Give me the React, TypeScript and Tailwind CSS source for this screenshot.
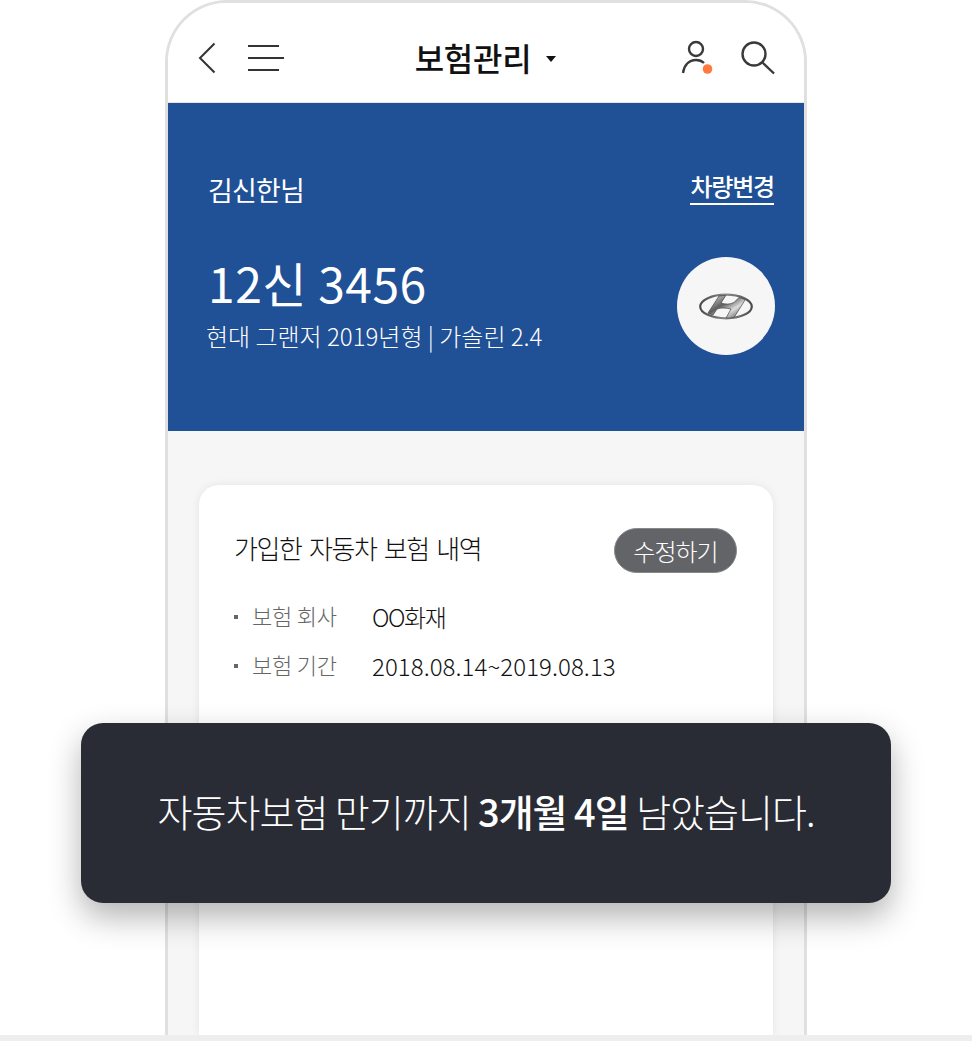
import React from "react";

const font = { fontFamily: '"Noto Sans CJK KR", "Noto Sans", sans-serif' };

function Header() {
  return (
    <header className="h-[100px] shrink-0 flex items-center justify-between bg-white border-b border-[#e4e4e4] pt-[10px] pl-[29px] pr-[29px]">
      <div className="flex items-center gap-[31px]">
        <svg width="20" height="32" viewBox="0 0 20 32" fill="none" stroke="#333" strokeWidth="2">
          <path d="M17.5 1.5 L3 16 L17.5 30.5" />
        </svg>
        <svg width="36" height="28" viewBox="0 0 36 28" fill="none" stroke="#333" strokeWidth="2">
          <path d="M0 2H31M0 14H36M0 26H31" />
        </svg>
      </div>
      <div className="flex items-center gap-[15px] ml-[6px] mt-[-2px]">
        <span className="text-[32px] font-medium text-[#111] tracking-[-0.3px] leading-none">보험관리</span>
        <svg width="10" height="6" viewBox="0 0 10 6" fill="#111" className="mt-[4px]"><path d="M0 0H10L5 6Z" /></svg>
      </div>
      <div className="flex items-center gap-[28px]">
        <svg width="32" height="36" viewBox="0 0 32 36" fill="none" stroke="#3a3a3a" strokeWidth="2.4">
          <circle cx="15" cy="9" r="7" />
          <path d="M2 33C3 25 8 20 15 20C18 20 21 21 23 23" />
          <circle cx="26.5" cy="29" r="4.8" fill="#ff7a3d" stroke="none" />
        </svg>
        <svg width="34" height="34" viewBox="0 0 34 34" fill="none" stroke="#3a3a3a" strokeWidth="2.4">
          <circle cx="13" cy="13" r="11.5" />
          <path d="M21 21L33 32.5" />
        </svg>
      </div>
    </header>
  );
}

function HyundaiLogo() {
  return (
    <svg width="54" height="27" viewBox="0 0 54 27" fill="none">
      <defs>
        <linearGradient id="chrome" x1="0" y1="0" x2="1" y2="1">
          <stop offset="0" stopColor="#e8e8e8" />
          <stop offset="0.4" stopColor="#5e5e5e" />
          <stop offset="0.65" stopColor="#dcdcdc" />
          <stop offset="1" stopColor="#404040" />
        </linearGradient>
        <linearGradient id="ring" x1="0" y1="0" x2="1" y2="0">
          <stop offset="0" stopColor="#4a4a4a" />
          <stop offset="0.5" stopColor="#8a8a8a" />
          <stop offset="1" stopColor="#4a4a4a" />
        </linearGradient>
      </defs>
      <ellipse cx="27" cy="13.5" rx="25.8" ry="11.8" stroke="url(#ring)" strokeWidth="2.2" />
      <path
        d="M20 3L27 2.2L22 10C26 11.5 31 11.5 35 9.5L40 4.5C43 5.5 45 6 46 7L35 24.5C32 25 30 25.2 27 25L32 16C28 15 22 14.5 18 16L14 22C12 21.5 10.5 21 9 20Z"
        fill="url(#chrome)"
        stroke="#444"
        strokeWidth="0.7"
      />
    </svg>
  );
}

function Banner() {
  return (
    <section className="h-[328px] shrink-0 bg-[#205096] text-white pl-[40px] pr-[29px] pt-[67px]">
      <div className="flex items-start justify-between">
        <span className="text-[27px] leading-[40px] tracking-[-0.8px]">김신한님</span>
        <span className="mt-[-1px] mr-[1px] text-[24px] leading-[34px] font-medium tracking-[-1.2px] border-b-2 border-white">차량변경</span>
      </div>
      <div className="flex items-start justify-between mt-[40px]">
        <div>
          <div className="text-[48px] leading-[64px] tracking-[0.5px]">12신 3456</div>
          <div className="mt-[5px] ml-[-2px] text-[24px] leading-[34px] font-light">현대 그랜저 2019년형 | 가솔린 2.4</div>
        </div>
        <div className="mt-[7px] w-[98px] h-[98px] rounded-full bg-[#f6f6f6] flex items-center justify-center">
          <HyundaiLogo />
        </div>
      </div>
    </section>
  );
}

function Row({ label, value, valueClass }: { label: string; value: string; valueClass: string }) {
  return (
    <div className="flex items-center h-[49px]">
      <span className="w-[4px] h-[4px] bg-[#666] mr-[14px]" />
      <span className="w-[120px] mt-[-2px] text-[22px] font-light text-[#666] tracking-[-0.2px]">{label}</span>
      <span className={valueClass}>{value}</span>
    </div>
  );
}

function Card() {
  return (
    <div className="flex-1 bg-[#f6f6f6] px-[31px] pt-[54px]">
      <div className="h-full bg-white rounded-t-[20px] shadow-[0_0_8px_rgba(0,0,0,0.08)] pl-[35px] pr-[36px] pt-[43px]">
        <div className="flex items-center justify-between">
          <span className="mt-[-6px] text-[26px] font-light text-[#111] tracking-[-1.4px] [word-spacing:3px]">가입한 자동차 보험 내역</span>
          <span className="w-[123px] h-[45px] rounded-full bg-[#636468] border border-[#888] flex items-center justify-center text-[24px] font-light text-white tracking-[-1px]">
            수정하기
          </span>
        </div>
        <div className="mt-[19px]">
          <Row label="보험 회사" value="OO화재" valueClass="text-[24px] font-light text-[#111] tracking-[-1.4px]" />
          <Row label="보험 기간" value="2018.08.14~2019.08.13" valueClass="text-[24px] font-light text-[#111] tracking-[0.07px]" />
        </div>
      </div>
    </div>
  );
}

export default function App() {
  return (
    <div className="relative w-[972px] h-[1041px] overflow-hidden bg-white flex flex-col" style={font}>
      <div className="flex-1 min-h-0 flex justify-center">
        <div className="w-[642px] flex flex-col bg-white border-[3px] border-b-0 border-[#e0e0e0] rounded-t-[62px] overflow-hidden">
          <Header />
          <Banner />
          <Card />
        </div>
      </div>
      <div className="h-[6px] shrink-0 bg-[#eeeeee]" />
      <div className="absolute left-[81px] top-[723px] w-[810px] h-[180px] pb-[6px] rounded-[22px] bg-[#2a2c35] shadow-[0_14px_32px_rgba(0,0,0,0.3)] flex items-center justify-center text-white text-[38px] font-light tracking-[-1px]">
        <span className="whitespace-pre">자동차보험 만기까지 <b className="font-medium">3개월 4일</b> 남았습니다.</span>
      </div>
    </div>
  );
}
